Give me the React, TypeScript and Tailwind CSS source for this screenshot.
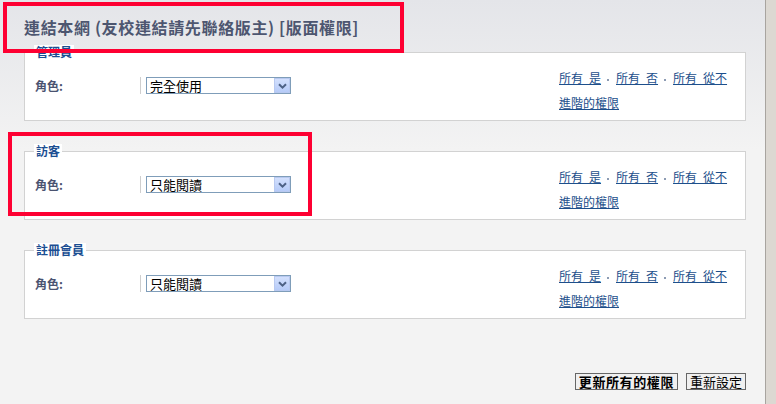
const font = { fontFamily: '"Noto Sans CJK TC", "Noto Sans", sans-serif' };

const groups = [
  { name: "管理員", role: "完全使用" },
  { name: "訪客", role: "只能閱讀" },
  { name: "註冊會員", role: "只能閱讀" },
];

function Dot() {
  return <span className="inline-block w-[2px] h-[2px] bg-[#8c9bb3] ml-[6px] mr-[7px] align-middle" />;
}

function FakeSelect({ value }: { value: string }) {
  return (
    <div className="ml-[5px] mt-[12px] w-[145px] h-[17px] border border-[#7f9db9] bg-white flex items-center justify-between">
      <span className="pl-[3px] text-[13px] leading-[15px] text-black">{value}</span>
      <span className="w-[16px] h-[15px] border border-[#b8c9f0] bg-gradient-to-b from-[#d3e0fd] to-[#b6cbf8] flex items-center justify-center">
        <svg width="9" height="6" viewBox="0 0 9 6">
          <path d="M1 1.2 L4.5 4.6 L8 1.2" fill="none" stroke="#4d6185" strokeWidth="2" />
        </svg>
      </span>
    </div>
  );
}

function Group({ name, role, first }: { name: string; role: string; first?: boolean }) {
  return (
    <fieldset className={`border border-[#d2d2d2] bg-white w-[722px] ${first ? "" : "mt-[23px]"}`}>
      <legend className="ml-[9px] px-[2px] bg-white text-[12px] leading-[14px] font-bold text-[#1b4e92]">
        {name}
      </legend>
      <div className="flex pl-[10px] pt-[6px] pb-[5px]">
        <div className="w-[105px] mt-[12px] text-[12px] leading-[17px] font-bold text-[#4a5370]">角色:</div>
        <div className="w-px h-[17px] mt-[12px] bg-[#cfcfcf]" />
        <FakeSelect value={role} />
        <div className="ml-[268px] w-[180px] text-[12px] leading-[25px] text-[#1d4f8b]">
          <div className="whitespace-nowrap">
            <a className="underline">所有&ensp;是</a>
            <Dot />
            <a className="underline">所有&ensp;否</a>
            <Dot />
            <a className="underline">所有&ensp;從不</a>
          </div>
          <div>
            <a className="underline">進階的權限</a>
          </div>
        </div>
      </div>
    </fieldset>
  );
}

export default function App() {
  return (
    <div className="flex w-[776px] h-[404px] overflow-hidden" style={font}>
      <div className="relative w-[765px] h-full bg-[linear-gradient(to_bottom,#e4e5e9_0px,#f3f3f3_150px)] pl-[24px]">
        <h1 className="pt-[17px] h-[45px] text-[16px] leading-[20px] font-bold text-[#4d5670] tracking-[0.65px]">
          連結本網 (友校連結請先聯絡版主) <span>[版面權限]</span>
        </h1>

        {groups.map((g, i) => (
          <Group key={g.name} name={g.name} role={g.role} first={i === 0} />
        ))}

        <div className="flex justify-end gap-[8px] w-[722px] mt-[54px]">
          <button className="h-[17px] px-[3px] border border-[#666] bg-[#f0f0f0] text-[13px] leading-[13px] font-bold text-black tracking-[0.6px]">
            更新所有的權限
          </button>
          <button className="h-[17px] px-[3px] border border-[#666] bg-[#f0f0f0] text-[13px] leading-[13px] text-black">
            重新設定
          </button>
        </div>

        {/* red annotation boxes */}
        <div className="absolute left-[3px] top-[2px] w-[401px] h-[51px] border-[4px] border-[#fe0032]" />
        <div className="absolute left-[8px] top-[132px] w-[304px] h-[84px] border-[4px] border-[#fe0032]" />
      </div>
      <div className="w-[11px] h-full border-l border-[#a8a49f] bg-[#dcd8d2]" />
    </div>
  );
}
